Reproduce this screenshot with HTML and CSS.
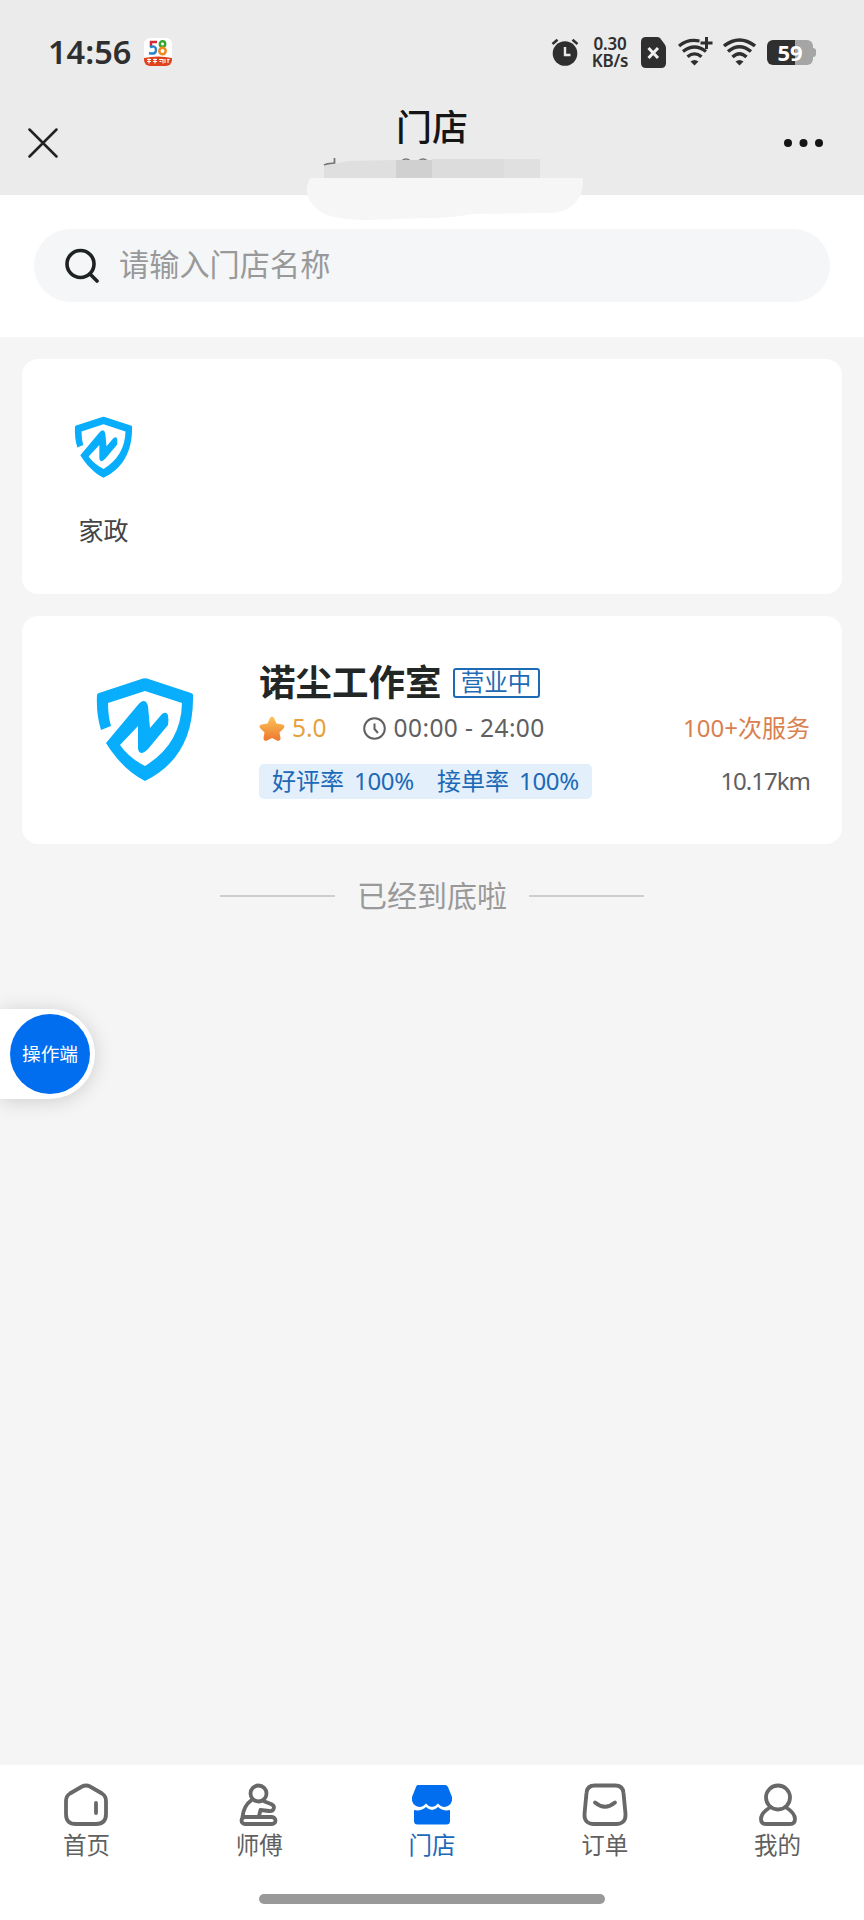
FILE: index.html
```html
<!DOCTYPE html>
<html lang="zh-CN">
<head>
<meta charset="utf-8">
<title>门店</title>
<link rel="stylesheet" href="styles.css">
</head>
<body>
<svg class="defs" width="0" height="0">
  <defs>
    <symbol id="shield" viewBox="0 0 98 106">
      <path fill="#08adfb" transform="translate(0 1)" d="M1 17Q1 15.500 3 15L47 .5Q49 0 51 .5L95 15Q97 15.500 97 17C98 60 80 88 49 103C32 94 20 81 10 65L41 28Q49 18 52 28L54 50L66 36Q74 31 72 47L52 71Q44 79 42 71V48L24 67Q33 80 49 88Q85 66 86 25L49 13L12 25Q12 38 15 48L5 52Q0 36 1 17Z"/>
    </symbol>
  </defs>
</svg>
<div class="page">
  <header class="header">
    <div class="status">
      <span class="time">14:56</span>
      <svg class="app" width="28" height="28" viewBox="0 0 28 28">
        <rect width="28" height="28" rx="6" fill="#fff"/>
        <path d="M0 20Q14 17 28 20V22A6 6 0 0 1 22 28H6A6 6 0 0 1 0 22Z" fill="#df421d"/>
        <g fill="none" stroke-width="2.500">
          <path d="M13 4H7V9" stroke="#d22a32"/>
          <path d="M6 9Q12 7 12 12T5 15" stroke="#2684c9"/>
          <circle cx="18.500" cy="6" r="2.700" stroke="#35a833"/>
          <circle cx="18.500" cy="13" r="3.200" stroke="#f18a20"/>
          <path d="M3 21.500h4M5 20.500v5M3 23.500h4M9 21.500h4M11 20.500v5M9 23.500h4M15 21.500h4v4M15.500 23.500h2M21 21v4M23 21.500h2.500M24 21v4" stroke="#fff" stroke-width="1.100"/>
        </g>
      </svg>
      <svg class="sys alarm" width="28" height="28" viewBox="0 0 28 28">
        <circle cx="14" cy="15.500" r="12.300" fill="#2f2f2f"/>
        <path d="M1.500 6L6.500 1.700M26.500 6L21.500 1.700" stroke="#2f2f2f" stroke-width="2.500"/>
        <path d="M14 9V17H19.500" fill="none" stroke="#ebebeb" stroke-width="2.400"/>
      </svg>
      <span class="speed"><span>0.30</span><span>KB/s</span></span>
      <svg class="sys sim" width="25" height="31" viewBox="0 0 25 31">
        <path d="M5 0H16Q18 0 19 1L23.500 7Q25 9 25 11V26Q25 31 20 31H5Q0 31 0 26V5Q0 0 5 0Z" fill="#2f2f2f"/>
        <path d="M7.500 11L17 21M17 11L7.500 21" stroke="#f0f0f0" stroke-width="3"/>
      </svg>
      <svg class="sys wifiplus" width="35" height="29" viewBox="0 0 35 29">
        <g fill="none" stroke="#2f2f2f" stroke-width="3.300">
          <path d="M1 9Q10 1.500 21.500 4M5 14.500Q16.500 5.500 28 14.500M9.500 19.800Q16.500 14 23.500 19.800"/>
          <path d="M28.500 0V12M22.500 6H34.500" stroke-width="3"/>
        </g>
        <path d="M12.500 24.500Q16.500 21.500 20.500 24.500L16.500 28.500Z" fill="#2f2f2f"/>
      </svg>
      <svg class="sys wifi" width="33" height="28" viewBox="0 0 33 28">
        <path d="M1 8Q16.500-4 32 8M5 13.500Q16.500 4 28 13.500M9.500 19Q16.500 12.500 23.500 19" fill="none" stroke="#2f2f2f" stroke-width="3.400"/>
        <path d="M12.500 23.500Q16.500 20.500 20.500 23.500L16.500 27.500Z" fill="#2f2f2f"/>
      </svg>
      <span class="battery"><span>59</span></span>
    </div>
    <div class="nav">
      <svg width="30" height="30" viewBox="0 0 30 30"><path d="M1.500 1.500L28.500 28.500M28.500 1.500L1.500 28.500" stroke="#222" stroke-width="2.500" stroke-linecap="round"/></svg>
      <h1>门店</h1>
      <svg width="39" height="8" viewBox="0 0 39 8" fill="#151515"><circle cx="4" cy="4" r="4"/><circle cx="19.500" cy="4" r="4"/><circle cx="35" cy="4" r="4"/></svg>
    </div>
    <svg class="smear" width="280" height="64" viewBox="0 0 280 64">
      <path d="M18 7Q22 5 28 5.500M28.500 0V6" fill="none" stroke="#777" stroke-width="1.800"/>
      <path d="M96 2.500Q100-.5 104 2.500M113 2.500Q117-.5 121 2.500" fill="none" stroke="#777" stroke-width="1.500"/>
      <path d="M18 8L42 3L90 2V20H18Z" fill="#dfdfdf"/>
      <path d="M90 2H126V20H90Z" fill="#d0d0d0"/>
      <path d="M126 1H198V20H126Z" fill="#dcdcdc"/>
      <path d="M198 1H234V20H198Z" fill="#e0e0e0"/>
      <path d="M4 20H277V27C275 44 263 55 242 55L165 56Q148 60 125 60L60 62Q25 61 15 54Q-2 41 1 28Z" fill="#f6f6f6"/>
    </svg>
  </header>

  <section class="search-area">
    <div class="search">
      <svg width="34" height="36" viewBox="0 0 34 36" fill="none" stroke="#1e2222" stroke-width="3.600" stroke-linecap="round"><circle cx="15.500" cy="16" r="13.500"/><path d="M25 26L32 33"/></svg>
      <span>请输入门店名称</span>
    </div>
  </section>

  <main class="main">
    <section class="card category">
      <div class="cat-item">
        <svg width="59" height="63"><use href="#shield"/></svg>
        <span>家政</span>
      </div>
    </section>

    <section class="card shop">
      <div class="logo"><svg width="98" height="106"><use href="#shield"/></svg></div>
      <div class="info">
        <div class="name"><h2>诺尘工作室</h2><span class="tag">营业中</span></div>
        <div class="row meta">
          <svg width="26" height="25" viewBox="0 0 26 25">
            <defs><linearGradient id="gold" x1="0" y1="0" x2="0" y2="1"><stop offset="0" stop-color="#fbc457"/><stop offset="1" stop-color="#ee7730"/></linearGradient></defs>
            <path d="M11 2Q13-1 15 2L17.500 7.500L23.500 8.500Q27 9.500 24.500 12.500L20.500 16.500L21.500 22Q21.500 25.500 18 24.500L13 22L8 24.500Q4.500 25.500 4.500 22L5.500 16.500L1.500 12.500Q-1 9.500 2.500 8.500L8.500 7.500Z" fill="url(#gold)"/>
          </svg>
          <span class="score">5.0</span>
          <svg class="clock" width="23" height="23" viewBox="0 0 23 23" fill="none" stroke="#606060" stroke-width="2"><circle cx="11.500" cy="11.500" r="10.300"/><path d="M11.500 6.500V12L15 16"/></svg>
          <span class="hours">00:00 - 24:00</span>
          <span class="served">100+次服务</span>
        </div>
        <div class="row rate-row">
          <div class="rates"><span>好评率</span><b>100%</b><span class="second">接单率</span><b>100%</b></div>
          <span class="distance">10.17km</span>
        </div>
      </div>
    </section>

    <div class="end"><i></i><span>已经到底啦</span><i></i></div>
  </main>

  <div class="float"><span>操作端</span></div>

  <footer class="footer">
    <nav class="tabs">
      <div class="tab">
        <svg width="46" height="44" viewBox="0 -1 46 44"><path d="M19 3.500Q23 1.500 27 3.500L39 10.500Q43 13 43 18V31Q43 41 33 41H13Q3 41 3 31V18Q3 13 7 10.500Z"/><path d="M33 20V30"/></svg>
        <span>首页</span>
      </div>
      <div class="tab">
        <svg width="46" height="44" viewBox="0 -1 46 44" stroke-linejoin="round"><circle cx="22.500" cy="10.500" r="8"/><path d="M15 17.500Q7.500 23 6.500 34M28.500 18.500L35 21Q39 23 37.500 26Q36.500 28.500 33 28L24.500 27L23 33"/><rect x="5.500" y="34" width="34" height="7" rx="3.500"/></svg>
        <span>师傅</span>
      </div>
      <div class="tab active">
        <svg width="46" height="44" viewBox="0 0 46 44"><path d="M9 3H36Q38 3 39 5L43 15Q44 23 36 25Q32 25 29 21.500Q26 25 23 25T17 21.500Q14 25 10 25Q2 23 3 15L7 5Q7.500 3 9 3Z"/><path d="M5 28Q12 29.500 17 25Q20 28 23 28T29 25Q34 29.500 41 28V39Q41 42.500 37.500 42.500H8.500Q5 42.500 5 39Z"/></svg>
        <span>门店</span>
      </div>
      <div class="tab">
        <svg width="46" height="44" viewBox="0 -1 46 44"><path d="M13 2.500H33Q41 2.500 41.500 10L43.500 31Q44 41 34 41H12Q2 41 2.500 31L4.500 10Q5 2.500 13 2.500Z"/><path d="M13 19.500Q23 28 33 19.500"/></svg>
        <span>订单</span>
      </div>
      <div class="tab">
        <svg width="46" height="44" viewBox="0 -1 46 44"><circle cx="23" cy="14.500" r="12"/><path d="M15.500 24Q6 30 6 36Q6 41 11 41H35Q40 41 40 36Q40 30 30.500 24"/></svg>
        <span>我的</span>
      </div>
    </nav>
    <div class="indicator"></div>
  </footer>
</div>
</body>
</html>
```
FILE: styles.css
```css
* { box-sizing: border-box; }
body {
  margin: 0;
  background: #f5f5f5;
  font-family: "Noto Sans", "Noto Sans CJK SC", sans-serif;
  color: #606060;
}
svg { display: block; flex: none; }
h1, h2 { margin: 0; }
.defs { position: absolute; }
.page {
  position: relative;
  width: 864px;
  height: 1920px;
  display: flex;
  flex-direction: column;
  overflow: hidden;
}

.header { position: relative; height: 195px; background: #ebebeb; }
.status {
  display: flex;
  align-items: center;
  height: 104px;
  padding: 0 48px;
  color: #2f2f2f;
}
.time { width: 96px; font-size: 32.500px; line-height: 40px; font-weight: 600; white-space: nowrap; }
.alarm { margin-left: 379px; }
.speed {
  display: flex;
  flex-direction: column;
  width: 38px;
  margin-left: 12px;
  font-size: 17px;
  font-weight: 600;
  line-height: 17.500px;
  letter-spacing: -0.2px;
  text-align: center;
  white-space: nowrap;
}
.sim { margin-left: 12px; }
.wifiplus { margin: -2px 0 0 12px; }
.wifi { margin-left: 10px; }
.battery {
  position: relative;
  flex: none;
  width: 46px;
  height: 25px;
  margin-left: 11px;
  border-radius: 6px;
  background: linear-gradient(90deg, #2f2f2f 60%, #a5a5a5 60%);
  color: #fff;
  font-size: 22px;
  font-weight: 700;
  line-height: 25px;
  text-align: center;
}
.battery::after {
  content: "";
  position: absolute;
  left: 46px;
  top: 8px;
  width: 3px;
  height: 9px;
  border-radius: 0 3px 3px 0;
  background: #a5a5a5;
}
.nav {
  display: flex;
  align-items: center;
  justify-content: space-between;
  height: 78px;
  padding: 0 41px 0 28px;
}
.nav h1 {
  padding: 0 0 30px 22px;
  color: #151515;
  font-size: 36px;
  line-height: 48px;
  font-weight: 500;
}
.smear { position: absolute; left: 306px; top: 158px; z-index: 1; }

.search-area { height: 142px; padding: 34px; background: #fff; }
.search {
  display: flex;
  align-items: center;
  gap: 20px;
  height: 73px;
  padding-left: 31px;
  border-radius: 37px;
  background: #f4f6f8;
  color: #999;
  font-size: 30.200px;
  line-height: 40px;
}
.search span { padding-bottom: 1px; }

.main { flex: 1; padding: 22px; }
.card { border-radius: 16px; background: #fff; }
.category { height: 235px; padding: 57px 0 0 47px; }
.cat-item {
  display: flex;
  flex-direction: column;
  align-items: center;
  gap: 34px;
  width: 69px;
  color: #444;
  font-size: 25px;
  line-height: 34px;
}
.shop { display: flex; height: 228px; margin-top: 22px; padding: 32px 32px 0 37px; }
.logo {
  display: flex;
  align-items: center;
  justify-content: center;
  width: 163px;
  height: 163px;
  padding-left: 8px;
}
.info { flex: 1; margin-left: 37px; }
.name { display: flex; align-items: center; height: 70px; padding-bottom: 2px; }
.name h2 { color: #222624; font-size: 36.500px; line-height: 48px; font-weight: 700; white-space: nowrap; }
.tag {
  width: 87px;
  height: 30px;
  margin: 1px 0 0 11px;
  border: 2px solid #1e6ab5;
  border-radius: 3px;
  color: #1e6ab5;
  font-size: 23.500px;
  line-height: 25px;
  text-align: center;
  white-space: nowrap;
}
.row { display: flex; align-items: center; white-space: nowrap; }
.meta { height: 20px; font-size: 24.500px; line-height: 30px; }
.score { margin-left: 7px; color: #e5a23c; }
.clock { margin-left: 36px; }
.hours { margin-left: 8px; letter-spacing: 0.4px; }
.served { margin-left: auto; color: #d9804f; font-size: 24px; }
.rate-row { justify-content: space-between; margin-top: 26px; height: 35px; }
.rates {
  display: flex;
  align-items: center;
  width: 333px;
  height: 35px;
  padding: 0 0 2px 13px;
  border-radius: 5px;
  background: #e3effb;
  color: #1c69b8;
  font-size: 24px;
  line-height: 33px;
}
.rates b { width: 61px; margin-left: 10px; font-weight: 400; letter-spacing: -0.3px; }
.rates .second { margin-left: 22px; }
.distance { padding-bottom: 3px; font-size: 24px; letter-spacing: -1px; }
.end {
  display: flex;
  align-items: center;
  justify-content: center;
  gap: 22px;
  height: 60px;
  margin-top: 22px;
  color: #999;
  font-size: 30px;
  line-height: 40px;
}
.end i { width: 115px; height: 2px; background: #cecece; }

.float {
  position: absolute;
  left: 0;
  top: 1009px;
  width: 95px;
  height: 90px;
  padding: 5px 5px 5px 10px;
  border-radius: 0 45px 45px 0;
  background: #fff;
  box-shadow: 0 2px 20px rgba(0, 0, 0, 0.16);
}
.float span {
  display: block;
  width: 80px;
  height: 80px;
  border-radius: 50%;
  background: #006eef;
  color: #fff;
  font-size: 18.700px;
  line-height: 80px;
  text-align: center;
}

.footer { height: 155px; background: #fff; }
.tabs { display: flex; height: 129px; }
.tab {
  flex: 1;
  display: flex;
  flex-direction: column;
  align-items: center;
  padding-top: 17px;
  font-size: 23.500px;
  line-height: 32px;
}
.tab svg { margin-bottom: 3px; overflow: visible; fill: none; stroke: #686868; stroke-width: 3.800; stroke-linecap: round; }
.active { color: #1c69b8; }
.tab.active svg { fill: #006eef; stroke: none; }
.indicator { width: 346px; height: 10px; margin: 0 auto; border-radius: 5px; background: #999; }
```
